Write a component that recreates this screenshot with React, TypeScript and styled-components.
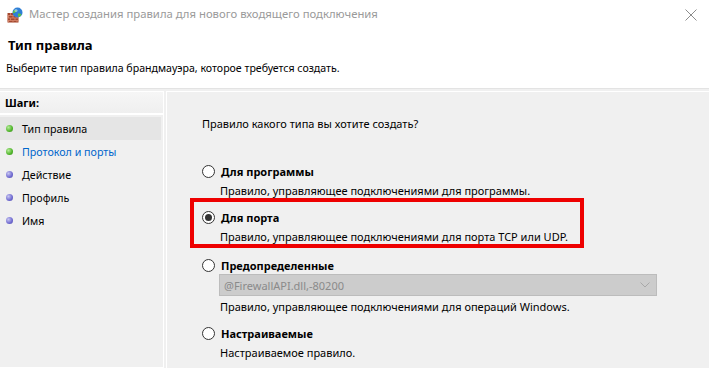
import React from "react";
import styled, { createGlobalStyle } from "styled-components";

const GlobalStyle = createGlobalStyle`
  html, body { margin: 0; padding: 0; background: #ffffff; }
  body { font-family: "Noto Sans", "Liberation Sans", sans-serif; font-size: 11px; color: #000; }
  * { box-sizing: border-box; }
`;

const Window = styled.div`
  width: 709px;
  height: 368px;
  display: flex;
  flex-direction: column;
  overflow: hidden;
  background: #fff;
`;

const TitleBar = styled.div`
  height: 30px;
  display: flex;
  align-items: center;
  padding: 0 12px 0 7px;
  gap: 6px;
`;

const TitleText = styled.div`
  flex: 1;
  color: #9a9a9a;
  font-size: 11.3px;
  line-height: 16px;
  margin-top: -2px;
  white-space: nowrap;
`;

const Header = styled.div`
  height: 59px;
  padding: 6px 0 0 8px;
  border-bottom: 1px solid #e3e3e3;
`;

const HeaderTitle = styled.div`
  font-weight: 700;
  font-size: 13px;
  line-height: 18px;
`;

const HeaderSub = styled.div`
  margin: 6px 0 0 -2px;
  font-size: 10.6px;
  line-height: 16px;
  white-space: nowrap;
`;

const Body = styled.div`
  flex: 1;
  display: flex;
  gap: 2px;
  background: #f0f0f0;
  padding-top: 2px;
`;

const Sidebar = styled.div`
  width: 164px;
  background: #f0f0f0;
  border: 1px solid #ffffff;
  border-left: none;
  display: flex;
  flex-direction: column;
`;

const SidebarHead = styled.div`
  height: 23px;
  padding-left: 5px;
  display: flex;
  align-items: center;
  font-weight: 700;
  font-size: 11px;
  background: linear-gradient(#f6f6f6, #efefef);
  border-bottom: 2px solid #ffffff;
`;

const StepList = styled.div`
  display: flex;
  flex-direction: column;
  padding-top: 2px;
`;

const Step = styled.div<{ $active?: boolean; $link?: boolean }>`
  height: 23px;
  display: flex;
  align-items: center;
  gap: 9px;
  padding-left: 6px;
  margin-right: 2px;
  background: ${(p) => (p.$active ? "#e5e5e5" : "transparent")};
  color: ${(p) => (p.$link ? "#0066cc" : "#000")};
  font-size: 10.7px;
  white-space: nowrap;
`;

const Bullet = styled.span<{ $done?: boolean }>`
  width: 7px;
  height: 7px;
  border-radius: 50%;
  flex: none;
  background: ${(p) =>
    p.$done
      ? "radial-gradient(circle at 35% 35%, #b6ec9a, #4fb42a 60%, #3a8c1c)"
      : "radial-gradient(circle at 35% 35%, #c8c6f2, #6f6ad0 60%, #4f4aa8)"};
`;

const Main = styled.div`
  flex: 1;
  background: #f0f0f0;
  border-top: 1px solid #ffffff;
  border-left: 1px solid #ffffff;
  padding: 24px 0 0 35px;
`;

const Question = styled.div`
  font-size: 11px;
  line-height: 16px;
`;

const Options = styled.div`
  display: flex;
  flex-direction: column;
  gap: 8px;
  margin-top: 30px;
`;

const Option = styled.div`
  display: flex;
  flex-direction: column;
`;

const Highlight = styled.div`
  width: 394px;
  height: 50px;
  margin: -10px 0 0 -12px;
  padding: 6px 0 0 8px;
  border: 4px solid #ee0000;
`;

const OptionLabel = styled.div`
  height: 18px;
  display: flex;
  align-items: center;
  gap: 6px;
  font-weight: 700;
  font-size: 11px;
  white-space: nowrap;
`;

const Radio = styled.span<{ $checked?: boolean }>`
  width: 13px;
  height: 13px;
  border-radius: 50%;
  border: 1px solid #333;
  background: #fff;
  display: inline-flex;
  align-items: center;
  justify-content: center;
  flex: none;
  &::after {
    content: "";
    width: 7px;
    height: 7px;
    border-radius: 50%;
    background: ${(p) => (p.$checked ? "#333" : "transparent")};
  }
`;

const OptionDesc = styled.div`
  height: 19px;
  margin-top: 1px;
  line-height: 19px;
  padding-left: 18px;
  font-size: 11px;
  white-space: nowrap;
`;

const Select = styled.div`
  margin-left: 17px;
  width: 438px;
  height: 22px;
  background: #cccccc;
  border: 1px solid #bcbcbc;
  display: flex;
  align-items: center;
  justify-content: space-between;
  padding: 0 6px 0 4px;
  color: #8a8a8a;
  font-size: 11px;
`;

const FirewallIcon = () => (
  <svg width="16" height="16" viewBox="0 0 16 16">
    <rect x="0.5" y="6" width="11" height="9.5" fill="#a4482f" />
    <g stroke="#d98a70" strokeWidth="0.8">
      <line x1="0.5" y1="8.5" x2="11.5" y2="8.5" />
      <line x1="0.5" y1="11" x2="11.5" y2="11" />
      <line x1="0.5" y1="13.5" x2="11.5" y2="13.5" />
      <line x1="3.5" y1="6" x2="3.5" y2="8.5" />
      <line x1="8" y1="6" x2="8" y2="8.5" />
      <line x1="1.5" y1="8.5" x2="1.5" y2="11" />
      <line x1="6" y1="8.5" x2="6" y2="11" />
      <line x1="10" y1="8.5" x2="10" y2="11" />
      <line x1="3.5" y1="11" x2="3.5" y2="13.5" />
      <line x1="8" y1="11" x2="8" y2="13.5" />
      <line x1="1.5" y1="13.5" x2="1.5" y2="15.5" />
      <line x1="6" y1="13.5" x2="6" y2="15.5" />
      <line x1="10" y1="13.5" x2="10" y2="15.5" />
    </g>
    <circle cx="10.5" cy="5.5" r="5" fill="#2f7fd6" />
    <path d="M7 3.2 Q9 2 10 3.5 Q9.5 5 8 5.5 Q7.2 6.5 6 6 Q5.8 4.2 7 3.2Z" fill="#5fc43c" />
    <path d="M11 6.5 Q13 6 14.5 7.5 Q13.5 9.8 11.5 10 Q10.8 8.4 11 6.5Z" fill="#5fc43c" />
    <circle cx="9" cy="3.5" r="1.6" fill="#bfe3ff" opacity="0.6" />
  </svg>
);

const CloseIcon = () => (
  <svg width="12" height="12" viewBox="0 0 12 12">
    <path d="M0.5 0.5 L11.5 11.5 M11.5 0.5 L0.5 11.5" stroke="#8c8c8c" strokeWidth="1" />
  </svg>
);

const Chevron = () => (
  <svg width="10" height="6" viewBox="0 0 10 6">
    <path d="M0.5 0.5 L5 5 L9.5 0.5" stroke="#a8a8a8" strokeWidth="1" fill="none" />
  </svg>
);

const steps = [
  { label: "Тип правила", done: true, active: true },
  { label: "Протокол и порты", done: true, link: true },
  { label: "Действие" },
  { label: "Профиль" },
  { label: "Имя" },
];

export default function App() {
  return (
    <>
      <GlobalStyle />
      <Window>
        <TitleBar>
          <FirewallIcon />
          <TitleText>Мастер создания правила для нового входящего подключения</TitleText>
          <CloseIcon />
        </TitleBar>
        <Header>
          <HeaderTitle>Тип правила</HeaderTitle>
          <HeaderSub>Выберите тип правила брандмауэра, которое требуется создать.</HeaderSub>
        </Header>
        <Body>
          <Sidebar>
            <SidebarHead>Шаги:</SidebarHead>
            <StepList>
              {steps.map((s) => (
                <Step key={s.label} $active={s.active} $link={s.link}>
                  <Bullet $done={s.done} />
                  {s.label}
                </Step>
              ))}
            </StepList>
          </Sidebar>
          <Main>
            <Question>Правило какого типа вы хотите создать?</Question>
            <Options>
              <Option>
                <OptionLabel>
                  <Radio />
                  Для программы
                </OptionLabel>
                <OptionDesc>Правило, управляющее подключениями для программы.</OptionDesc>
              </Option>
              <Highlight>
                <Option>
                  <OptionLabel>
                    <Radio $checked />
                    Для порта
                  </OptionLabel>
                  <OptionDesc>Правило, управляющее подключениями для порта TCP или UDP.</OptionDesc>
                </Option>
              </Highlight>
              <Option>
                <OptionLabel>
                  <Radio />
                  Предопределенные
                </OptionLabel>
                <Select>
                  <span>@FirewallAPI.dll,-80200</span>
                  <Chevron />
                </Select>
                <OptionDesc>Правило, управляющее подключениями для операций Windows.</OptionDesc>
              </Option>
              <Option>
                <OptionLabel>
                  <Radio />
                  Настраиваемые
                </OptionLabel>
                <OptionDesc>Настраиваемое правило.</OptionDesc>
              </Option>
            </Options>
          </Main>
        </Body>
      </Window>
    </>
  );
}
